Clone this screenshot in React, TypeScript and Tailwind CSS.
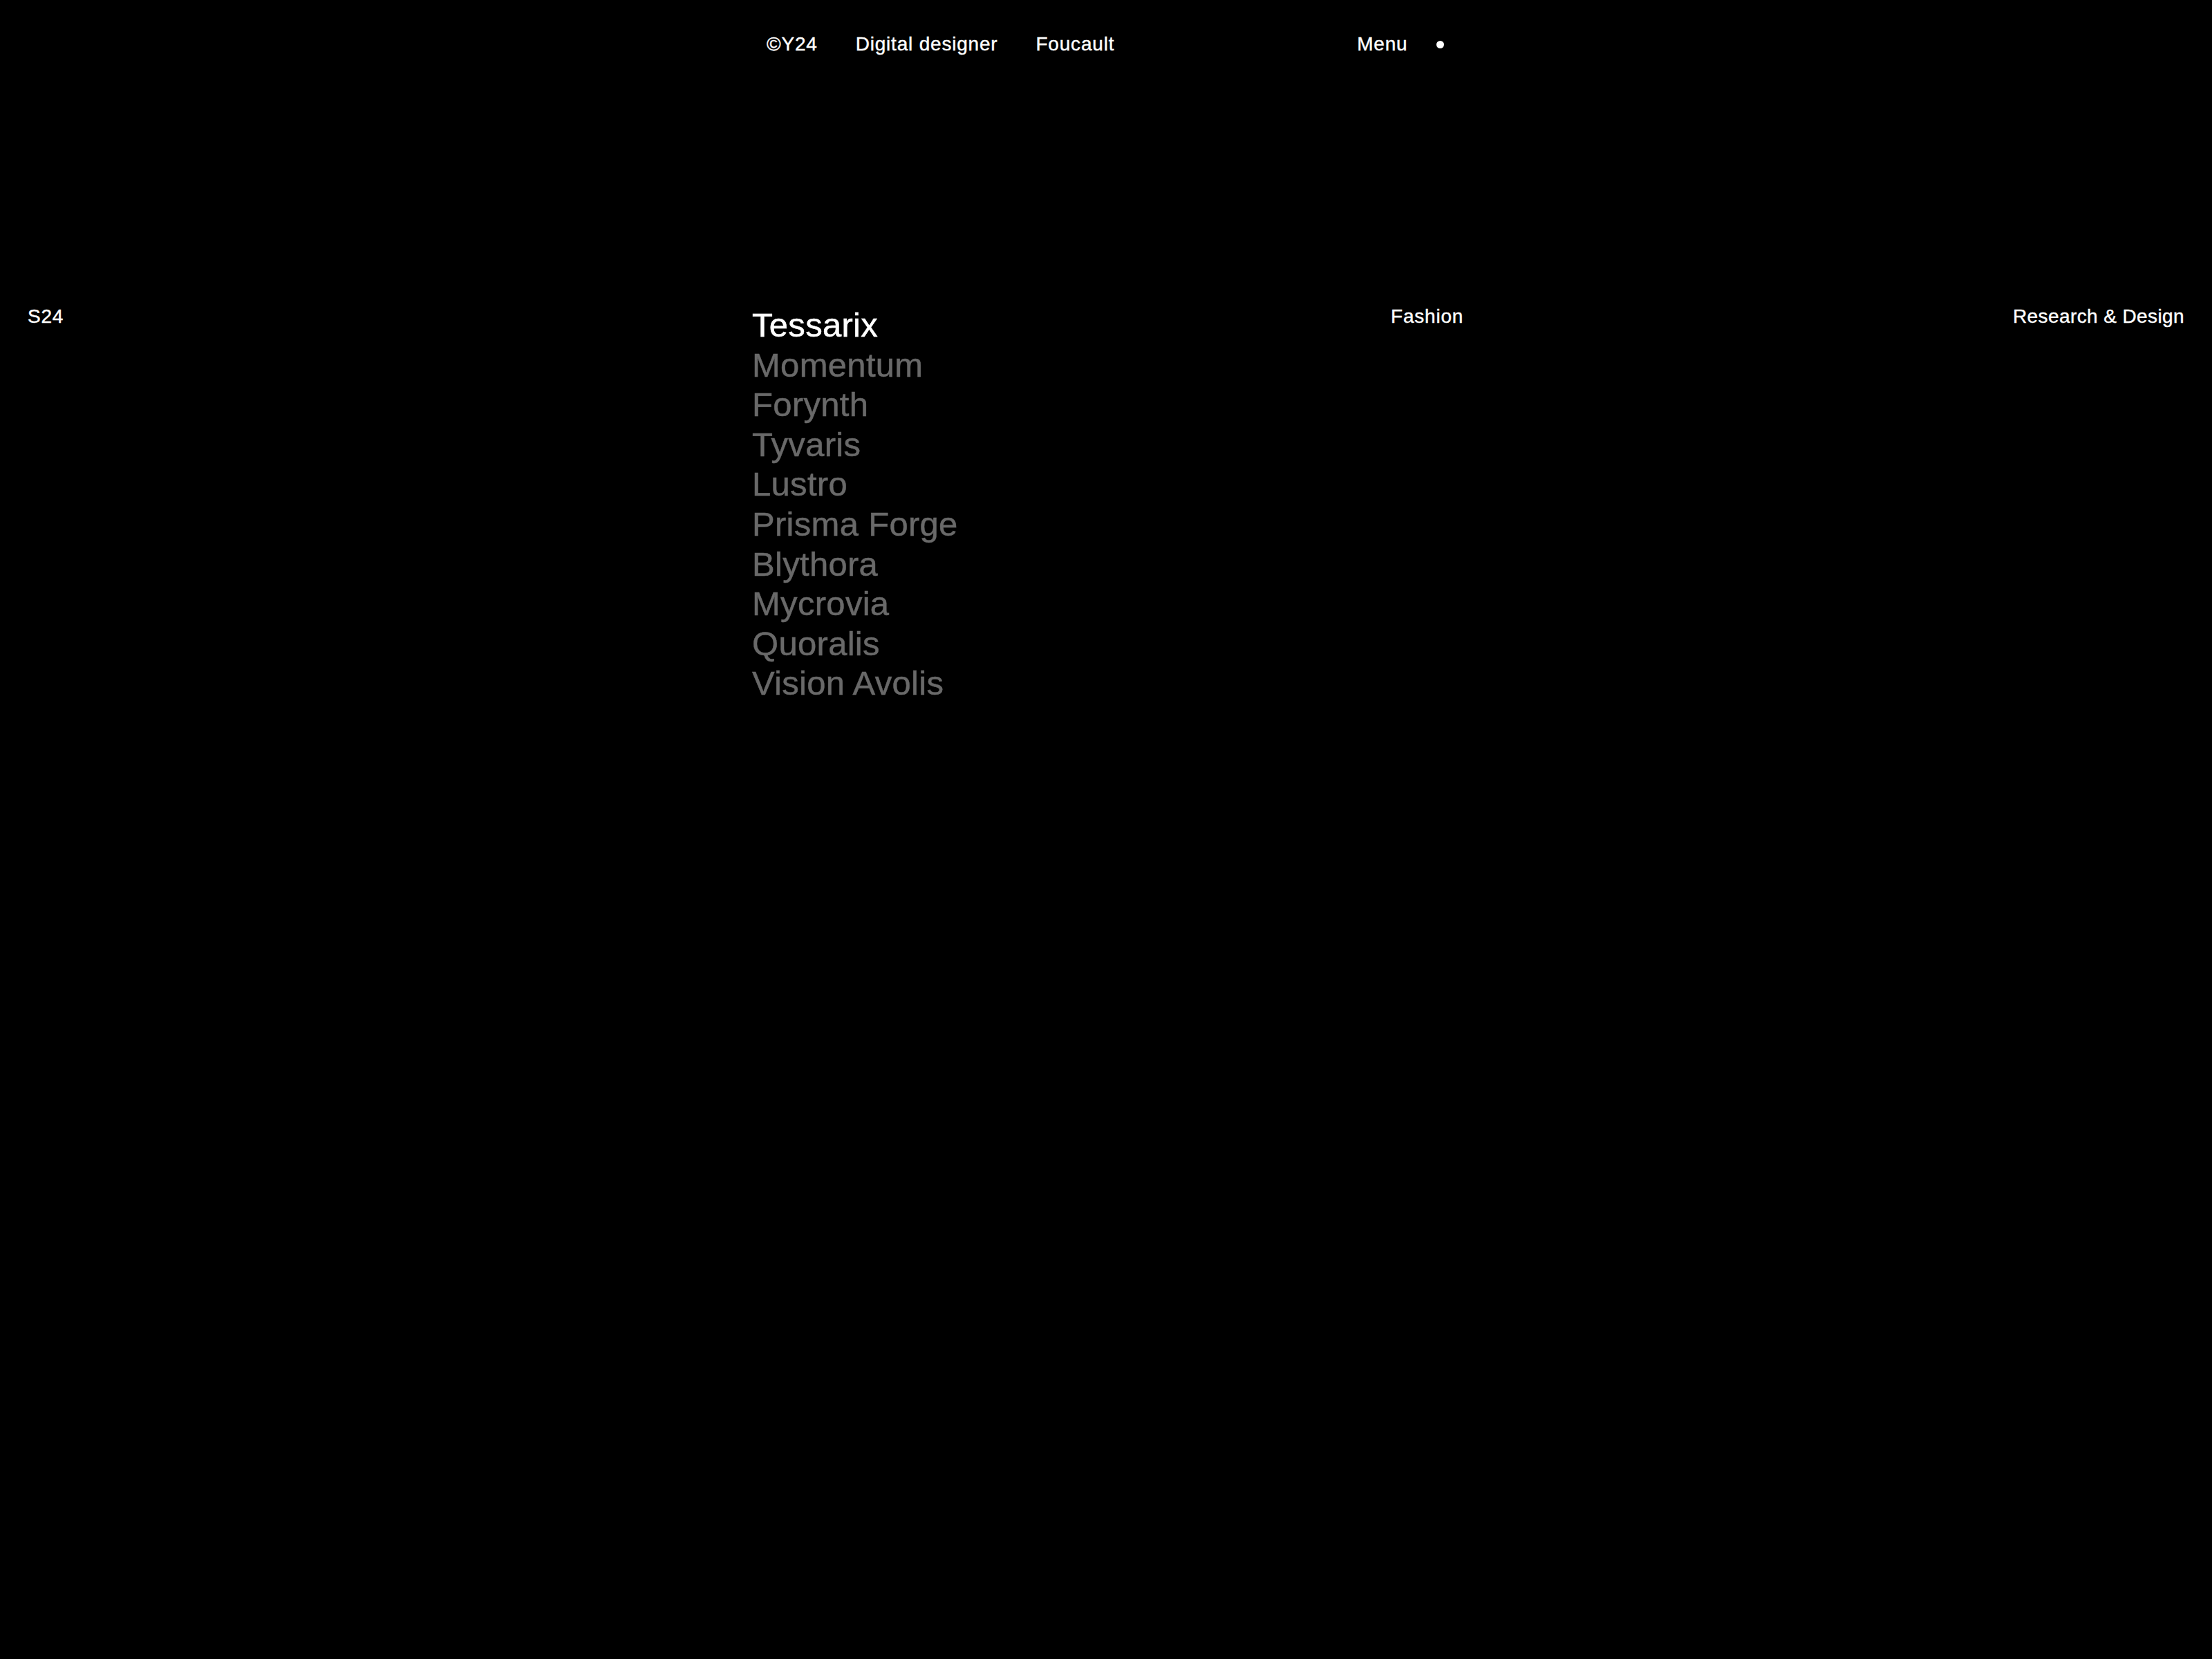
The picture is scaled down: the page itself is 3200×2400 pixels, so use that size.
import React from "react";

const items = [
  "Tessarix",
  "Momentum",
  "Forynth",
  "Tyvaris",
  "Lustro",
  "Prisma Forge",
  "Blythora",
  "Mycrovia",
  "Quoralis",
  "Vision Avolis",
];

const small = "text-[28px] leading-none tracking-[0.8px] [-webkit-text-stroke:0.4px_white]";

export default function App() {
  return (
    <div
      className="min-h-screen w-full bg-black text-white"
      style={{ fontFamily: '"Liberation Sans", Arial, sans-serif' }}
    >
      <header className={`flex items-center pl-[1109px] pt-[50px] ${small}`}>
        <span>©Y24</span>
        <span className="ml-[55px]">Digital designer</span>
        <span className="ml-[55px]">Foucault</span>
        <span className="ml-[351px]">Menu</span>
        <span className="ml-[41px] h-[11px] w-[11px] rounded-full bg-white" />
      </header>

      <main className="mt-[362px] grid grid-cols-[1048px_924px_1fr_auto] items-start px-[40px]">
        <div className={`mt-[4px] ${small}`}>S24</div>
        <ul className="mt-[2px] flex flex-col text-[49px] leading-[57.6px] tracking-[0.3px] [-webkit-text-stroke:0.5px_currentColor]">
          {items.map((name, i) => (
            <li key={name} className={i === 0 ? "text-white" : "text-[#696969]"}>
              {name}
            </li>
          ))}
        </ul>
        <div className={`mt-[4px] ${small}`}>Fashion</div>
        <div className="mt-[4px] text-[28px] leading-none tracking-[0.4px] [-webkit-text-stroke:0.4px_white]">
          Research &amp; Design
        </div>
      </main>
    </div>
  );
}
